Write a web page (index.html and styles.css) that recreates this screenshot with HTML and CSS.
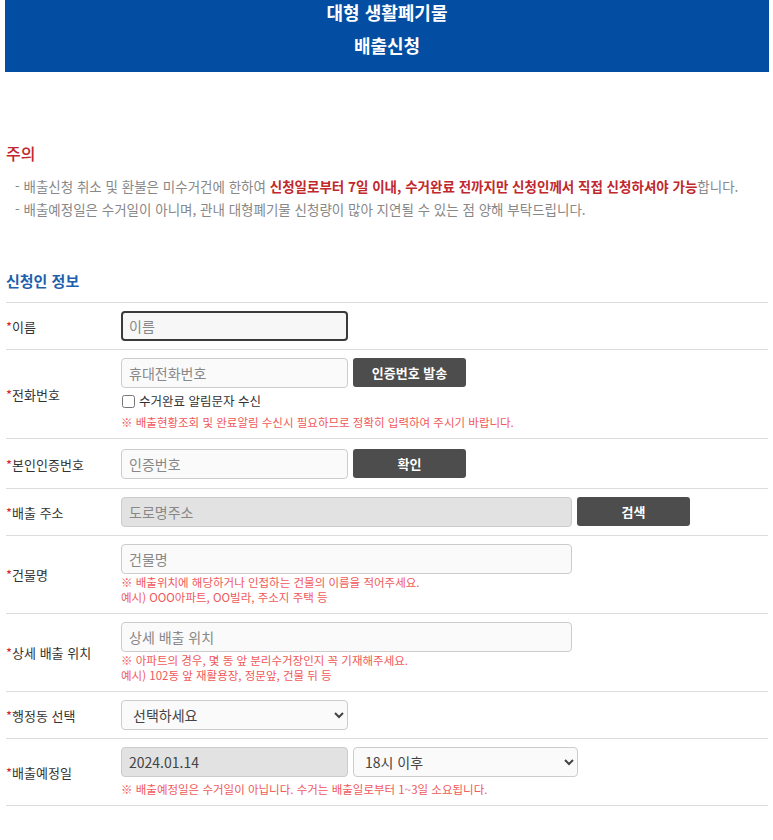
FILE: index.html
```html
<!DOCTYPE html>
<html lang="ko">
<head>
  <meta charset="UTF-8" />
  <meta name="viewport" content="width=device-width, initial-scale=1.0" />
  <title>대형 생활폐기물 배출신청</title>
  <link rel="stylesheet" href="styles.css">
</head>
<body>
  <div class="container">
    <header class="page-head">
      <h1>대형 생활폐기물<br>배출신청</h1>
    </header>

    <section class="notice">
      <h2>주의</h2>
      <ul>
        <li>- 배출신청 취소 및 환불은 미수거건에 한하여 <strong>신청일로부터 7일 이내, 수거완료 전까지만 신청인께서 직접 신청하셔야 가능</strong>합니다.</li>
        <li>- 배출예정일은 수거일이 아니며, 관내 대형폐기물 신청량이 많아 지연될 수 있는 점 양해 부탁드립니다.</li>
      </ul>
    </section>

    <section class="applicant">
      <h3>신청인 정보</h3>
      <form id="applyForm">
        <div class="row">
          <label for="name"><span class="req">*</span>이름</label>
          <div class="field">
            <input type="text" id="name" class="short focused" placeholder="이름" />
          </div>
        </div>

        <div class="row">
          <label for="phone"><span class="req">*</span>전화번호</label>
          <div class="field">
            <div class="line">
              <input type="text" id="phone" class="short" placeholder="휴대전화번호" />
              <button type="button" class="btn">인증번호 발송</button>
            </div>
            <label class="check"><input type="checkbox" id="sms" /> 수거완료 알림문자 수신</label>
            <p class="note">※ 배출현황조회 및 완료알림 수신시 필요하므로 정확히 입력하여 주시기 바랍니다.</p>
          </div>
        </div>

        <div class="row tall">
          <label for="authNo"><span class="req">*</span>본인인증번호</label>
          <div class="field">
            <div class="line">
              <input type="text" id="authNo" class="short" placeholder="인증번호" />
              <button type="button" class="btn">확인</button>
            </div>
          </div>
        </div>

        <div class="row">
          <label for="addr"><span class="req">*</span>배출 주소</label>
          <div class="field">
            <div class="line">
              <input type="text" id="addr" class="long readonly" placeholder="도로명주소" readonly />
              <button type="button" class="btn">검색</button>
            </div>
          </div>
        </div>

        <div class="row">
          <label for="building"><span class="req">*</span>건물명</label>
          <div class="field">
            <input type="text" id="building" class="long" placeholder="건물명" />
            <p class="note">※ 배출위치에 해당하거나 인접하는 건물의 이름을 적어주세요.<br>예시) OOO아파트, OO빌라, 주소지 주택 등</p>
          </div>
        </div>

        <div class="row">
          <label for="spot"><span class="req">*</span>상세 배출 위치</label>
          <div class="field">
            <input type="text" id="spot" class="long" placeholder="상세 배출 위치" />
            <p class="note">※ 아파트의 경우, 몇 동 앞 분리수거장인지 꼭 기재해주세요.<br>예시) 102동 앞 재활용장, 정문앞, 건물 뒤 등</p>
          </div>
        </div>

        <div class="row">
          <label for="dong"><span class="req">*</span>행정동 선택</label>
          <div class="field">
            <select id="dong" class="short">
              <option value="">선택하세요</option>
            </select>
          </div>
        </div>

        <div class="row">
          <label for="date"><span class="req">*</span>배출예정일</label>
          <div class="field">
            <div class="line">
              <input type="text" id="date" class="short readonly" value="2024.01.14" readonly />
              <select id="time" class="mid">
                <option value="18">18시 이후</option>
              </select>
            </div>
            <p class="note">※ 배출예정일은 수거일이 아닙니다. 수거는 배출일로부터 1~3일 소요됩니다.</p>
          </div>
        </div>
      </form>
    </section>
  </div>
</body>
</html>
```

FILE: styles.css
```css
body {
  margin: 0;
  font-family: "Noto Sans CJK KR", "Noto Sans", sans-serif;
  color: #333;
  background: #fff;
}
.container {
  padding: 0 4px 30px 5px;
}
.page-head {
  background: #034ea2;
  margin-top: -4px;
  padding: 0 0 10px;
}
.page-head h1 {
  margin: 0;
  color: #fff;
  font-size: 18px;
  font-weight: 700;
  line-height: 33px;
  text-align: center;
}
.notice {
  padding: 0 1px;
  margin-top: 69px;
}
.notice h2 {
  margin: 0;
  font-size: 16px;
  font-weight: 500;
  line-height: 24px;
  color: #c0282d;
}
.notice ul {
  list-style: none;
  margin: 10px 0 0;
  padding: 0 0 0 9px;
}
.notice li {
  font-size: 13.5px;
  line-height: 23px;
  color: #888;
}
.notice strong {
  color: #c0282d;
  font-weight: 700;
}
.applicant {
  margin-top: 48px;
  padding: 0 1px;
}
.applicant h3 {
  margin: 0 0 9px;
  font-size: 15px;
  font-weight: 700;
  line-height: 24px;
  color: #1f5fae;
}
form {
  border-top: 1px solid #ddd;
}
.row {
  display: grid;
  grid-template-columns: 115px 1fr;
  align-items: center;
  border-bottom: 1px solid #ddd;
  padding: 8px 0;
}
.row.tall {
  padding: 10px 0 9px;
}
.row > label {
  font-size: 13px;
  color: #333;
}
.req {
  color: #d6262b;
}
.line {
  display: flex;
  gap: 5px;
}
input[type="text"], select {
  box-sizing: border-box;
  height: 30px;
  padding: 0 7px;
  border: 1px solid #ccc;
  border-radius: 4px;
  background: #fafafa;
  font-family: inherit;
  font-size: 14px;
  color: #444;
}
input::placeholder {
  color: #888;
}
.short {
  width: 227px;
}
.mid {
  width: 225px;
}
.long {
  width: 451px;
}
input.readonly {
  background: #e2e2e2;
}
input.focused {
  border: 2px solid #3a3a3a;
  padding: 0 6px;
  background: #f7f7f7;
}
.btn {
  width: 113px;
  height: 29px;
  border: none;
  border-radius: 3px;
  background: #4d4d4d;
  color: #fff;
  font-family: inherit;
  font-size: 13px;
  font-weight: 700;
}
.check {
  display: flex;
  align-items: center;
  gap: 4px;
  margin-top: 4px;
  font-size: 12.5px;
  line-height: 18px;
  color: #333;
}
.check input {
  margin: 0 0 0 1px;
  width: 13px;
  height: 13px;
}
.note {
  margin: 1px 0 0;
  font-size: 11.5px;
  line-height: 15px;
  color: #f0585a;
}
.check + .note,
.line + .note {
  margin-top: 5px;
}
```
